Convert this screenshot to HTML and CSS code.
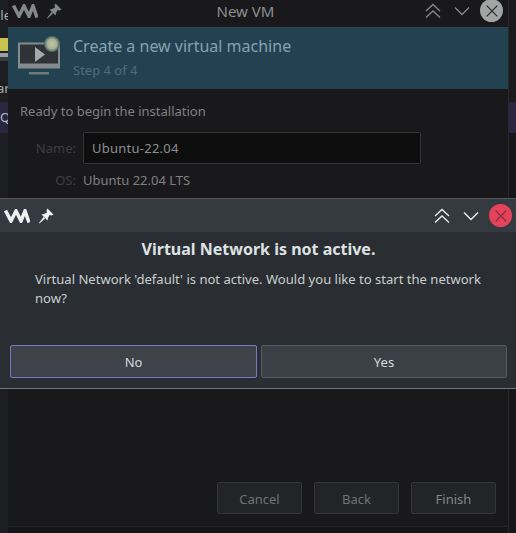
FILE: index.html
```html
<!DOCTYPE html>
<html lang="en">
<head>
<meta charset="utf-8">
<title>New VM</title>
<link rel="stylesheet" href="styles.css">
</head>
<body>
<svg class="defs" width="0" height="0" aria-hidden="true">
  <symbol id="vm" viewBox="0 0 26 14">
    <path d="M1.500 1.500L7 12l5-10 5 10 4-10 4 11.500" fill="none" stroke="currentColor" stroke-width="3.500"/>
  </symbol>
  <symbol id="pin" viewBox="0 0 16 16">
    <path d="M9.500.5l6 6-2 1-2-.5-1.500 3-.5 2.500-6-6L6 6l3-1.500-.5-2zM5.500 9L7 10.500 1.500 15.500l-.5-.5z" fill="currentColor"/>
  </symbol>
  <symbol id="up2" viewBox="0 0 16 16">
    <path d="M1 8l7-6.500L15 8M1 14.500L8 8l7 6.500" fill="none" stroke="currentColor" stroke-width="1.300"/>
  </symbol>
  <symbol id="down" viewBox="0 0 16 10">
    <path d="M1 1.500l7 7 7-7" fill="none" stroke="currentColor" stroke-width="1.300"/>
  </symbol>
  <symbol id="x" viewBox="0 0 12 12">
    <path d="M.7.700l10.600 10.600M11.300.700L.7 11.300" fill="none" stroke="currentColor" stroke-width="1.200"/>
  </symbol>
</svg>

<div class="desktop">
  <div class="strip">
    <span class="strip-text s1">ile</span>
    <span class="strip-icon"></span>
    <span class="strip-text s2">ar</span>
    <span class="strip-q">Q</span>
  </div>

  <main class="vm-window">
    <header class="titlebar">
      <svg class="vm-logo"><use href="#vm"/></svg>
      <svg class="pin"><use href="#pin"/></svg>
      <span class="title">New VM</span>
      <svg class="up"><use href="#up2"/></svg>
      <svg class="down"><use href="#down"/></svg>
      <span class="close"><svg class="x"><use href="#x"/></svg></span>
    </header>
    <section class="banner">
      <svg class="monitor" viewBox="0 0 46 38" width="46" height="38" aria-hidden="true">
        <defs>
          <radialGradient id="glow"><stop offset="0" stop-color="#c3c9a4"/><stop offset=".6" stop-color="#a9b094"/><stop offset="1" stop-color="#3f6160"/></radialGradient>
        </defs>
        <rect x="1" y="2.500" width="42" height="26" fill="#848b8d"/>
        <rect x="3" y="4.500" width="38" height="19" fill="#2f3336"/>
        <path d="M18 7l10 7.500-10 7.500z" fill="#a3aaac"/>
        <rect x="12" y="32" width="20" height="2.500" fill="#70797b"/>
        <circle cx="35" cy="4" r="8" fill="url(#glow)"/>
      </svg>
      <div class="banner-text">
        <div class="banner-title">Create a new virtual machine</div>
        <div class="banner-step">Step 4 of 4</div>
      </div>
    </section>
    <section class="content">
      <p class="ready">Ready to begin the installation</p>
      <div class="form">
        <span class="label">Name:</span>
        <div class="input">Ubuntu-22.04</div>
        <span class="label">OS:</span>
        <div class="os">Ubuntu 22.04 LTS</div>
      </div>
    </section>
    <footer class="actions">
      <button class="bg-btn">Cancel</button>
      <button class="bg-btn">Back</button>
      <button class="bg-btn finish">Finish</button>
    </footer>
  </main>

  <div class="strip right"></div>

  <section class="dialog">
    <header class="dialog-bar">
      <svg class="vm-logo"><use href="#vm"/></svg>
      <svg class="pin"><use href="#pin"/></svg>
      <span class="spacer"></span>
      <svg class="up"><use href="#up2"/></svg>
      <svg class="down"><use href="#down"/></svg>
      <span class="close red"><svg class="x"><use href="#x"/></svg></span>
    </header>
    <div class="dialog-body">
      <h1>Virtual Network is not active.</h1>
      <p>Virtual Network 'default' is not active. Would you like to start the network now?</p>
      <div class="dialog-buttons">
        <button class="btn focus">No</button>
        <button class="btn">Yes</button>
      </div>
    </div>
  </section>
</div>
</body>
</html>
```

FILE: styles.css
```css
* { box-sizing: border-box; }
html, body { margin: 0; padding: 0; }
body {
  width: 516px;
  height: 533px;
  overflow: hidden;
  background: #141517;
  font-family: "Noto Sans", "DejaVu Sans", sans-serif;
  font-size: 13px;
}
.defs { position: absolute; }
.desktop {
  position: relative;
  display: flex;
  width: 516px;
  height: 533px;
  overflow: hidden;
}
.strip {
  position: relative;
  flex: 0 0 8px;
  width: 8px;
  overflow: hidden;
  background: #1d1e21;
}
.strip.right {
  background: linear-gradient(#1a1a1c 0, #1a1a1c 102px, #2c2640 102px, #2c2640 133px, #161618 133px);
  border-left: 1px solid #26282b;
}
.strip-text { position: absolute; left: -3px; color: #a9adb0; line-height: 16px; }
.s1 { top: 7px; }
.s2 { top: 80px; }
.strip-icon {
  position: absolute;
  top: 38px;
  left: 0;
  width: 8px;
  height: 23px;
  background: linear-gradient(#c9c24f 0, #c9c24f 13px, #1d1e21 13px, #1d1e21 15px, #9a9fa2 15px, #9a9fa2 19px, #3a3d40 19px);
}
.strip-q {
  position: absolute;
  top: 102px;
  left: 0;
  width: 8px;
  height: 31px;
  background: #2b2640;
  color: #b9bcc4;
  line-height: 30px;
}
.vm-window {
  flex: 0 0 500px;
  display: flex;
  flex-direction: column;
  height: 527px;
  background: #19191b;
  border-bottom: 1px solid #242628;
}
.titlebar {
  display: flex;
  align-items: center;
  height: 27px;
  padding: 0 5px 6px 4px;
  background: #19191b;
  color: #85888a;
}
.vm-logo { width: 26px; height: 14px; flex: none; }
.pin { width: 16px; height: 16px; flex: none; margin-left: 8px; }
.titlebar .title {
  flex: 1;
  text-align: center;
  font-size: 15px;
  color: #8c8f91;
  margin-left: 4px;
}
.titlebar .up { margin-right: 13px; }
.titlebar .down { margin-right: 10px; }
.up { width: 16px; height: 16px; flex: none; }
.down { width: 16px; height: 10px; flex: none; }
.close {
  display: flex;
  align-items: center;
  justify-content: center;
  width: 23px;
  height: 23px;
  border-radius: 50%;
  background: #a1a5a4;
  color: #26282a;
  flex: none;
}
.x { width: 12px; height: 12px; }
.banner {
  display: flex;
  align-items: center;
  height: 62px;
  background: #234251;
  border-top: 1px solid #33444e;
  padding-left: 9px;
  gap: 10px;
}
.monitor { flex: none; overflow: visible; }
.banner-title { font-size: 16px; line-height: 20px; color: #84a3b1; margin-top: -2px; }
.banner-step { font-size: 13px; line-height: 18px; color: #4d6c7b; margin-top: 5px; }
.content { flex: 1; padding: 13px 0 0 12px; background: #19191b; }
.ready { margin: 0; font-size: 13px; line-height: 18px; color: #7f8183; }
.form {
  display: grid;
  grid-template-columns: 56px 338px;
  column-gap: 7px;
  row-gap: 7px;
  align-items: center;
  margin-top: 12px;
}
.label { text-align: right; color: #3d3f41; font-size: 13px; }
.input {
  height: 32px;
  padding-left: 8px;
  line-height: 30px;
  border: 1px solid #333537;
  border-radius: 2px;
  background: #0e0e0f;
  color: #8b8e90;
  font-size: 13px;
  letter-spacing: .25px;
}
.os { color: #7d8082; font-size: 13px; line-height: 18px; }
.actions {
  display: flex;
  justify-content: flex-end;
  gap: 12px;
  padding: 0 12px 12px 0;
}
.bg-btn {
  width: 85px;
  height: 32px;
  padding: 2px 0 0;
  border: 1px solid #333537;
  border-radius: 2px;
  background: #232426;
  color: #717375;
  font: 13px "Noto Sans", sans-serif;
}
.bg-btn.finish { color: #85878a; }
.dialog {
  position: absolute;
  left: 0;
  top: 198px;
  width: 516px;
  height: 191px;
  background: #2a2e32;
  border-top: 1px solid #565a5e;
  border-bottom: 1px solid #74777a;
}
.dialog-bar {
  display: flex;
  align-items: center;
  height: 33px;
  padding: 0 4px 0 4px;
  background: #343a40;
  color: #eef0f1;
}
.spacer { flex: 1; }
.dialog-bar .up { margin-right: 13px; }
.dialog-bar .down { margin-right: 10px; }
.close.red { background: #e5435c; color: #7e2a38; }
.dialog-body { padding: 0 9px 0 10px; }
h1 {
  margin: 7px 0 0;
  text-align: center;
  font-size: 16px;
  line-height: 20px;
  font-weight: 700;
  color: #dfe2e4;
}
.dialog-body p {
  margin: 11px 0 0 25px;
  width: 460px;
  font-size: 13.060px;
  line-height: 19px;
  color: #c9ced1;
}
.dialog-buttons {
  display: grid;
  grid-template-columns: 247px 246px;
  gap: 4px;
  margin-top: 37px;
}
.btn {
  height: 33px;
  border: 1px solid #565b60;
  border-radius: 2px;
  background: #3b4046;
  color: #d6d9db;
  font: 13px "Noto Sans", sans-serif;
}
.btn.focus {
  border-color: #7a79c6;
  background: #3f4248;
}
```
